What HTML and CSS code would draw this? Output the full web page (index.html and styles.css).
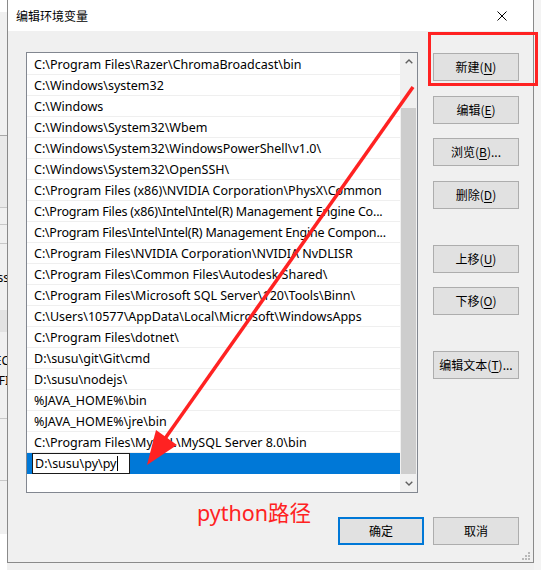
FILE: index.html
```html
<!DOCTYPE html>
<html>
<head>
<meta charset="utf-8">
<title>编辑环境变量</title>
<link rel="stylesheet" href="styles.css">
</head>
<body>
<div class="screen">
  <div class="bg-left">
    <div class="bl h12 white"></div>
    <div class="bl h124 line"></div>
    <div class="bl h72 band line-soft"></div>
    <div class="bl h17 line-soft"></div>
    <div class="bl h19 line-soft"></div>
    <div class="bl h24"></div>
    <div class="bl h20 txt"><span>ss</span></div>
    <div class="bl h22"></div>
    <div class="bl h22 band2"></div>
    <div class="bl h19"></div>
    <div class="bl h20 txt"><span>EC</span></div>
    <div class="bl h24 txt"><span>FI</span></div>
    <div class="bl h24 line-soft"></div>
    <div class="bl h62 line-soft"></div>
    <div class="bl h53"></div>
    <div class="bl rest white"></div>
  </div>

  <div class="dialog">
    <div class="titlebar">
      <span class="title">编辑环境变量</span>
      <svg class="close" viewBox="0 0 10 10" width="10" height="10"><path d="M0.5 0.5 L9.5 9.5 M9.5 0.5 L0.5 9.5" stroke="#000" stroke-width="1" fill="none"/></svg>
    </div>
    <div class="body">
      <div class="main">
        <div class="listbox">
          <div class="rows">
            <div class="row">C:\Program Files\Razer\ChromaBroadcast\bin</div>
            <div class="row">C:\Windows\system32</div>
            <div class="row">C:\Windows</div>
            <div class="row">C:\Windows\System32\Wbem</div>
            <div class="row">C:\Windows\System32\WindowsPowerShell\v1.0\</div>
            <div class="row">C:\Windows\System32\OpenSSH\</div>
            <div class="row">C:\Program Files (x86)\NVIDIA Corporation\PhysX\Common</div>
            <div class="row tight">C:\Program Files (x86)\Intel\Intel(R) Management Engine Co...</div>
            <div class="row tight">C:\Program Files\Intel\Intel(R) Management Engine Compon...</div>
            <div class="row">C:\Program Files\NVIDIA Corporation\NVIDIA NvDLISR</div>
            <div class="row">C:\Program Files\Common Files\Autodesk Shared\</div>
            <div class="row">C:\Program Files\Microsoft SQL Server\120\Tools\Binn\</div>
            <div class="row">C:\Users\10577\AppData\Local\Microsoft\WindowsApps</div>
            <div class="row">C:\Program Files\dotnet\</div>
            <div class="row">D:\susu\git\Git\cmd</div>
            <div class="row">D:\susu\nodejs\</div>
            <div class="row">%JAVA_HOME%\bin</div>
            <div class="row">%JAVA_HOME%\jre\bin</div>
            <div class="row">C:\Program Files\MySQL\MySQL Server 8.0\bin</div>
            <div class="row selected"><span class="editbox">D:\susu\py\py<span class="caret"></span></span></div>
          </div>
          <div class="scrollbar">
            <div class="sb-btn"><svg width="8" height="5" viewBox="0 0 8 5"><path d="M0.7 4.3 L4 1 L7.3 4.3" stroke="#606060" stroke-width="1.4" fill="none"/></svg></div>
            <div class="sb-track"><div class="sb-thumb"></div></div>
            <div class="sb-btn"><svg width="8" height="5" viewBox="0 0 8 5"><path d="M0.7 0.7 L4 4 L7.3 0.7" stroke="#606060" stroke-width="1.4" fill="none"/></svg></div>
          </div>
        </div>
        <div class="side">
          <div class="btn">新建(<u>N</u>)</div>
          <div class="btn sp-a">编辑(<u>E</u>)</div>
          <div class="btn sp-b">浏览(<u>B</u>)...</div>
          <div class="btn sp-a">删除(<u>D</u>)</div>
          <div class="btn sp-c">上移(<u>U</u>)</div>
          <div class="btn sp-b">下移(<u>O</u>)</div>
          <div class="btn sp-c">编辑文本(<u>T</u>)...</div>
        </div>
      </div>
      <div class="footer">
        <span class="note">python路径</span>
        <div class="btn ok">确定</div>
        <div class="btn cancel">取消</div>
      </div>
    </div>
    <svg class="grip" width="9" height="9" viewBox="0 0 9 9">
      <rect x="6" y="0" width="2" height="2" fill="#b8b8b8"/>
      <rect x="3" y="3" width="2" height="2" fill="#b8b8b8"/>
      <rect x="6" y="3" width="2" height="2" fill="#b8b8b8"/>
      <rect x="0" y="6" width="2" height="2" fill="#b8b8b8"/>
      <rect x="3" y="6" width="2" height="2" fill="#b8b8b8"/>
      <rect x="6" y="6" width="2" height="2" fill="#b8b8b8"/>
    </svg>
  </div>

  <div class="bg-right"></div>
</div>

<svg class="annot" width="541" height="570" viewBox="0 0 541 570">
  <rect x="429.5" y="33.5" width="107" height="51" fill="none" stroke="#ff2222" stroke-width="3"/>
  <line x1="413" y1="87" x2="164" y2="440" stroke="#ff2222" stroke-width="3.5"/>
  <polygon points="147,465 177,445 156,430" fill="#ff2222"/>
</svg>
</body>
</html>
```

FILE: styles.css
```css
* { box-sizing: border-box; margin: 0; padding: 0; }

html, body {
  width: 541px;
  height: 570px;
  overflow: hidden;
}

body {
  background: #f0f0f0;
  font-family: "Noto Sans", "Noto Sans CJK SC", sans-serif;
  font-size: 12px;
  color: #000;
  position: relative;
}

.screen {
  display: flex;
  width: 541px;
  height: 570px;
}

/* window behind, on the left */
.bg-left {
  width: 7px;
  flex: none;
  display: flex;
  flex-direction: column;
  overflow: hidden;
  background: #f0f0f0;
}
.bl { flex: none; }
.h12 { height: 12px; }
.h17 { height: 17px; }
.h19 { height: 19px; }
.h20 { height: 20px; }
.h22 { height: 22px; }
.h24 { height: 24px; }
.h53 { height: 53px; }
.h62 { height: 62px; }
.h72 { height: 72px; }
.h124 { height: 124px; }
.rest { flex: 1; }
.white { background: #fff; }
.line { border-bottom: 1px solid #a8a8a8; }
.line-soft { border-bottom: 1px solid #c8c8c8; }
.band { background: #e9e9e9; }
.band2 { background: #e2e2e2; }
.txt {
  display: flex;
  justify-content: flex-end;
  overflow: hidden;
  white-space: nowrap;
  font-size: 12px;
  line-height: 20px;
}
.txt span { flex: none; margin-right: -2px; }

.bg-right {
  flex: 1;
  background: #f3f3f3;
}

/* dialog */
.dialog {
  position: relative;
  width: 527px;
  height: 563px;
  flex: none;
  border: 1px solid #8a8a8a;
  border-top: none;
  background: #f0f0f0;
  display: flex;
  flex-direction: column;
}

.titlebar {
  height: 31px;
  flex: none;
  background: #fff;
  display: flex;
  align-items: center;
  justify-content: space-between;
  padding: 0 26px 0 8px;
}
.title {
  font-family: "Noto Sans CJK SC", sans-serif;
  font-size: 12px;
  line-height: 16px;
  margin-top: 1px;
}
.close { display: block; }

.body {
  flex: 1;
  display: flex;
  flex-direction: column;
  padding: 21px 14px 0 18px;
}

.main {
  display: flex;
  gap: 15px;
}

.listbox {
  width: 392px;
  height: 441px;
  flex: none;
  border: 1px solid #828790;
  background: #fff;
  display: flex;
}

.rows {
  flex: 1;
  min-width: 0;
  padding-top: 1px;
  overflow: hidden;
}

.row {
  height: 21px;
  border-bottom: 1px solid #efefef;
  padding: 1px 2px 0 7px;
  font-size: 12.5px;
  line-height: 19px;
  white-space: nowrap;
  overflow: hidden;
  text-overflow: ellipsis;
}
.row.tight { letter-spacing: -0.2px; }

.row.selected {
  background: #0078d7;
  border-bottom: none;
  padding: 0 0 0 5px;
  display: flex;
}

.editbox {
  width: 98px;
  height: 21px;
  border: 1px solid #1a1a1a;
  background: #fff;
  padding-left: 2px;
  display: flex;
  align-items: center;
  line-height: 19px;
}
.caret {
  width: 1px;
  height: 15px;
  background: #000;
  margin-left: 1px;
}

.scrollbar {
  width: 17px;
  flex: none;
  background: #f0f0f0;
  display: flex;
  flex-direction: column;
}
.sb-btn {
  height: 17px;
  flex: none;
  display: flex;
  align-items: center;
  justify-content: center;
}
.sb-btn svg { display: block; }
.sb-track {
  flex: 1;
  padding: 38px 1px 0 1px;
}
.sb-thumb {
  height: 366px;
  background: #cdcdcd;
}

/* buttons */
.side {
  width: 86px;
  flex: none;
  display: flex;
  flex-direction: column;
  padding-top: 1px;
}

.btn {
  width: 86px;
  height: 28px;
  flex: none;
  background: #e1e1e1;
  border: 1px solid #adadad;
  font-family: "Noto Sans CJK SC", sans-serif;
  font-size: 12px;
  line-height: 16px;
  display: flex;
  align-items: center;
  justify-content: center;
  color: #000;
}
.btn u { text-underline-offset: 2px; }
.sp-a { margin-top: 15px; }
.sp-b { margin-top: 14px; }
.sp-c { margin-top: 36px; }

.footer {
  display: flex;
  align-items: flex-start;
  margin-top: 7px;
}
.note {
  margin-left: 171px;
  color: #ff2222;
  font-family: "Noto Sans", "Noto Sans CJK SC", sans-serif;
  font-size: 21.5px;
  line-height: 26px;
}
.footer .btn { margin-top: 17px; }
.ok {
  margin-left: auto;
  border: 2px solid #0078d7;
}
.cancel { margin-left: 9px; }

.grip {
  position: absolute;
  right: 2px;
  bottom: 1px;
  display: block;
}

/* annotation overlay */
.annot {
  position: absolute;
  left: 0;
  top: 0;
  pointer-events: none;
}
```
